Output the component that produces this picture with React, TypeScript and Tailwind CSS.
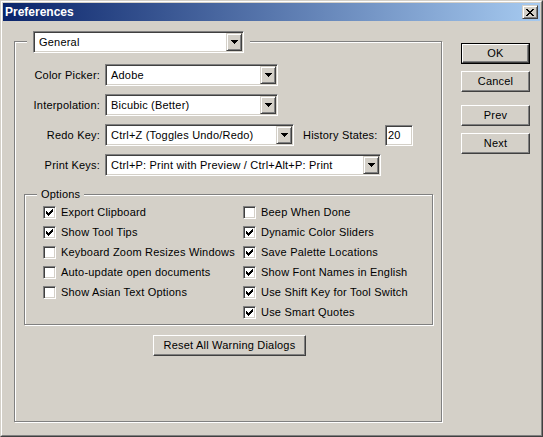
import React from 'react';

const ARROW = ['#######', '.#####.', '..###..', '...#...'];
const CHECK = ['......#', '.....##', '#...###', '##.###.', '#####..', '.###...', '..#....'];
const CLOSE = ['##....##', '.##..##.', '..####..', '...##...', '..####..', '.##..##.', '##....##'];

const Pixels: React.FC<{ rows: string[] }> = ({ rows }) => (
  <svg width={rows[0].length} height={rows.length} shapeRendering="crispEdges" className="block">
    {rows.flatMap((r, y) =>
      r.split('').map((c, x) =>
        c === '#' ? <rect key={`${x}-${y}`} x={x} y={y} width={1} height={1} fill="#000" /> : null
      )
    )}
  </svg>
);

// small raised box used for the combo arrow and the caption close button
const RaisedSmall: React.FC<{ className: string; children: React.ReactNode }> = ({ className, children }) => (
  <div
    className={`${className} bg-[#D4D0C8] flex items-center justify-center border border-t-[#D4D0C8] border-l-[#D4D0C8] border-r-[#404040] border-b-[#404040] shadow-[inset_1px_1px_0_#fff,inset_-1px_-1px_0_#808080]`}
  >
    {children}
  </div>
);

const Combo: React.FC<{ value: string; width: string }> = ({ value, width }) => (
  <div
    className={`${width} h-[22px] shrink-0 bg-white flex p-px border border-t-[#808080] border-l-[#808080] border-r-white border-b-white shadow-[inset_1px_1px_0_#404040,inset_-1px_-1px_0_#D4D0C8]`}
  >
    <div className="flex-1 flex items-center pl-[4px] whitespace-nowrap overflow-hidden">{value}</div>
    <RaisedSmall className="w-[16px] h-full">
      <Pixels rows={ARROW} />
    </RaisedSmall>
  </div>
);

const Checkbox: React.FC<{ label: string; checked?: boolean }> = ({ label, checked }) => (
  <div className="h-[20px] flex items-center gap-[5px] whitespace-nowrap">
    <div className="w-[13px] h-[13px] shrink-0 bg-white p-[2px] border border-t-[#808080] border-l-[#808080] border-r-white border-b-white shadow-[inset_1px_1px_0_#404040,inset_-1px_-1px_0_#D4D0C8]">
      {checked && <Pixels rows={CHECK} />}
    </div>
    <span>{label}</span>
  </div>
);

const Button: React.FC<{ label: string; isDefault?: boolean; className?: string }> = ({ label, isDefault, className = '' }) => {
  const face = (
    <div className="w-full h-full flex items-center justify-center border border-t-white border-l-white border-r-[#404040] border-b-[#404040] shadow-[inset_-1px_-1px_0_#808080]">
      {label}
    </div>
  );
  return (
    <div className={`${className} bg-[#D4D0C8] ${isDefault ? 'border border-black' : ''}`}>{face}</div>
  );
};

const Row: React.FC<{ label: string; children: React.ReactNode }> = ({ label, children }) => (
  <div className="h-[22px] flex items-center">
    <div className="w-[86px] text-right pr-px whitespace-nowrap">{label}</div>
    <div className="ml-[4px] flex items-center">{children}</div>
  </div>
);

export default function App() {
  return (
    <div className="w-[543px] h-[437px] bg-[#D4D0C8] font-['Liberation_Sans',Arial,sans-serif] text-[11px] tracking-[0.2px] text-black border border-t-[#D4D0C8] border-l-[#D4D0C8] border-r-[#404040] border-b-[#404040]">
      <div className="h-full flex flex-col p-px border border-t-white border-l-white border-r-[#808080] border-b-[#808080]">
        {/* caption */}
        <div className="h-[18px] shrink-0 flex items-center justify-between pl-[2px] pr-[2px] bg-linear-to-r/srgb from-[#0A246A] to-[#A6CAF0]">
          <span className="text-white font-bold text-[12px] tracking-normal">Preferences</span>
          <RaisedSmall className="w-[16px] h-[14px]">
            <Pixels rows={CLOSE} />
          </RaisedSmall>
        </div>

        <div className="flex">
          {/* main group */}
          <div className="ml-[11px] mt-[20px] w-[428px] h-[381px] flex flex-col border border-[#808080] shadow-[inset_1px_1px_0_#fff,1px_1px_0_#fff]">
            <div className="-mt-[11px] ml-[12px] px-[6px] self-start bg-[#D4D0C8]">
              <Combo value="General" width="w-[211px]" />
            </div>

            <div className="mt-[11px] flex flex-col gap-[8px]">
              <Row label="Color Picker:">
                <Combo value="Adobe" width="w-[173px]" />
              </Row>
              <Row label="Interpolation:">
                <Combo value="Bicubic (Better)" width="w-[173px]" />
              </Row>
              <Row label="Redo Key:">
                <Combo value="Ctrl+Z (Toggles Undo/Redo)" width="w-[189px]" />
                <span className="ml-[9px] w-[82px] whitespace-nowrap">History States:</span>
                <div className="w-[28px] h-[21px] bg-white flex items-center pl-[2px] border border-t-[#808080] border-l-[#808080] border-r-white border-b-white shadow-[inset_1px_1px_0_#404040,inset_-1px_-1px_0_#D4D0C8]">
                  20
                </div>
              </Row>
              <Row label="Print Keys:">
                <Combo value="Ctrl+P: Print with Preview / Ctrl+Alt+P: Print" width="w-[276px]" />
              </Row>
            </div>

            {/* options group */}
            <div className="ml-[9px] mt-[18px] w-[409px] h-[131px] flex flex-col border border-[#808080] shadow-[inset_1px_1px_0_#fff,1px_1px_0_#fff]">
              <div className="-mt-[7px] ml-[12px] px-[4px] self-start bg-[#D4D0C8] leading-[13px]">Options</div>
              <div className="mt-[1px] pl-[18px] flex">
                <div className="w-[200px] flex flex-col">
                  <Checkbox label="Export Clipboard" checked />
                  <Checkbox label="Show Tool Tips" checked />
                  <Checkbox label="Keyboard Zoom Resizes Windows" />
                  <Checkbox label="Auto-update open documents" />
                  <Checkbox label="Show Asian Text Options" />
                </div>
                <div className="flex flex-col">
                  <Checkbox label="Beep When Done" />
                  <Checkbox label="Dynamic Color Sliders" checked />
                  <Checkbox label="Save Palette Locations" checked />
                  <Checkbox label="Show Font Names in English" checked />
                  <Checkbox label="Use Shift Key for Tool Switch" checked />
                  <Checkbox label="Use Smart Quotes" checked />
                </div>
              </div>
            </div>

            <Button label="Reset All Warning Dialogs" className="ml-[138px] mt-[10px] w-[153px] h-[21px]" />
          </div>

          {/* buttons */}
          <div className="ml-[19px] mt-[22px] flex flex-col">
            <Button label="OK" isDefault className="w-[69px] h-[21px]" />
            <Button label="Cancel" className="mt-[7px] w-[69px] h-[21px]" />
            <Button label="Prev" className="mt-[13px] w-[69px] h-[21px]" />
            <Button label="Next" className="mt-[7px] w-[69px] h-[21px]" />
          </div>
        </div>
      </div>
    </div>
  );
}
